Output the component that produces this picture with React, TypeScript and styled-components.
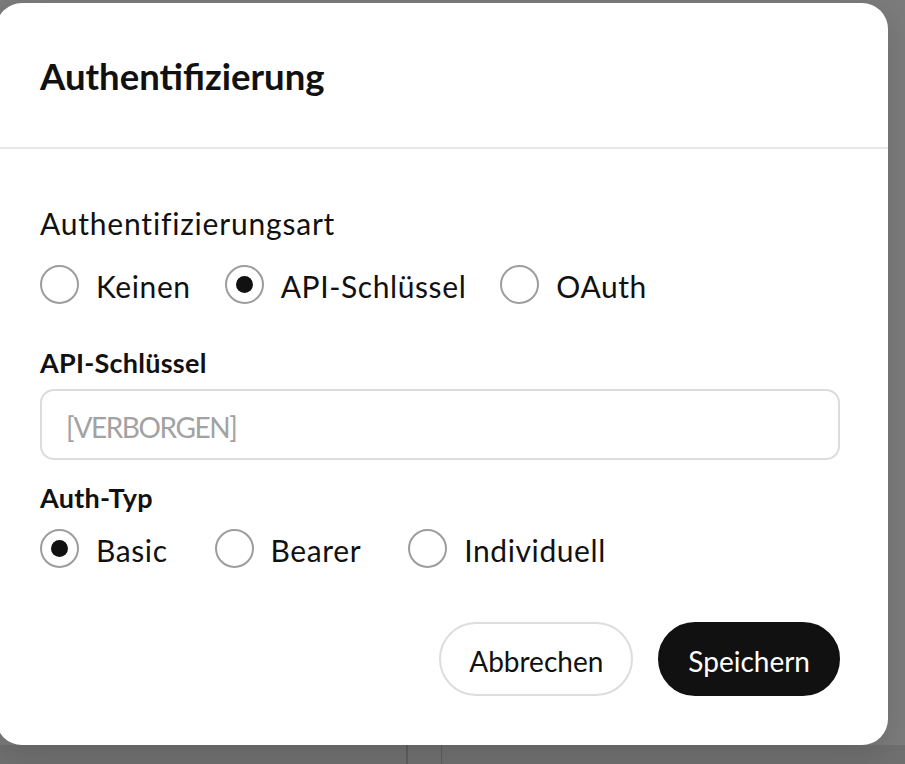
import React, { useState } from "react";
import styled, { createGlobalStyle } from "styled-components";

const GlobalStyle = createGlobalStyle`
  html, body { margin: 0; padding: 0; }
  body {
    background: #7b7b7b;
    font-family: "Lato", "Open Sans", sans-serif;
    color: #111;
    overflow: hidden;
  }
  * { box-sizing: border-box; }
`;

const Screen = styled.div`
  height: 764px;
  display: flex;
  flex-direction: column;
  background: #7b7b7b;
  overflow: hidden;
`;

const Modal = styled.section`
  flex: none;
  width: 892px;
  height: 742px;
  margin: 3px 0 0 -4px;
  background: #fff;
  border-radius: 26px;
  box-shadow: 0 8px 28px rgba(0, 0, 0, 0.12);
  display: flex;
  flex-direction: column;
  position: relative;
  z-index: 1;
`;

const Header = styled.header`
  height: 146px;
  padding: 52px 48px 0 44px;
  border-bottom: 2px solid #e7e7e7;
`;

const Title = styled.h2`
  margin: 0;
  font-size: 36.5px;
  line-height: 42px;
  font-weight: 700;
  color: #111;
`;

const Body = styled.div`
  padding: 52px 48px 49px 44px;
  display: flex;
  flex-direction: column;
`;

const SectionLabel = styled.div`
  font-size: 30px;
  line-height: 45px;
  letter-spacing: 0.8px;
  color: #111;
`;

const RadioRow = styled.div<{ $gap: number; $top: number }>`
  display: flex;
  align-items: center;
  gap: ${(p) => p.$gap}px;
  margin-top: ${(p) => p.$top}px;
`;

const Option = styled.label`
  display: flex;
  align-items: center;
  gap: 17px;
  cursor: pointer;
`;

const Circle = styled.span<{ $checked: boolean }>`
  width: 39px;
  height: 39px;
  margin-bottom: 4px;
  border-radius: 50%;
  border: 2px solid #9d9d9d;
  background: #fff;
  display: flex;
  align-items: center;
  justify-content: center;
  flex: none;
  &::after {
    content: "";
    width: 17px;
    height: 17px;
    border-radius: 50%;
    background: #111;
    display: ${(p) => (p.$checked ? "block" : "none")};
  }
`;

const OptionText = styled.span`
  font-size: 30px;
  line-height: 45px;
  letter-spacing: 0.6px;
  color: #111;
  white-space: nowrap;
`;

const FieldLabel = styled.div<{ $top: number }>`
  margin-top: ${(p) => p.$top}px;
  font-size: 27px;
  line-height: 39px;
  font-weight: 700;
  letter-spacing: 0.25px;
  color: #111;
`;

const TextInput = styled.input`
  margin-top: 7px;
  width: 100%;
  height: 71px;
  padding: 4px 24px 0 24px;
  border: 2px solid #dcdcdc;
  border-radius: 14px;
  font-family: "Lato", "Open Sans", sans-serif;
  font-size: 28px;
  color: #111;
  background: #fff;
  outline: none;
  &::placeholder {
    color: #a2a2a2;
    letter-spacing: -1.4px;
  }
`;

const Actions = styled.div`
  margin-top: 49px;
  display: flex;
  justify-content: flex-end;
  gap: 25px;
`;

const Button = styled.button<{ $primary?: boolean }>`
  height: 74px;
  padding: 4px 28px 0;
  border-radius: 37px;
  border: 2px solid ${(p) => (p.$primary ? "#111" : "#dddddd")};
  background: ${(p) => (p.$primary ? "#111" : "#fff")};
  color: ${(p) => (p.$primary ? "#fff" : "#111")};
  font-family: "Lato", "Open Sans", sans-serif;
  font-size: 28px;
  cursor: pointer;
`;

const Backdrop = styled.div`
  flex: 1;
  background: #6f6f6f;
  display: flex;
  padding-left: 406px;
  gap: 33px;
`;

const Divider = styled.div`
  width: 1.5px;
  background: #5c5c5c;
`;

type Opt = { id: string; label: string };

function RadioGroup({
  options,
  value,
  onChange,
  gap,
  top,
}: {
  options: Opt[];
  value: string;
  onChange: (v: string) => void;
  gap: number;
  top: number;
}) {
  return (
    <RadioRow $gap={gap} $top={top} role="radiogroup">
      {options.map((o) => (
        <Option key={o.id} onClick={() => onChange(o.id)}>
          <Circle $checked={value === o.id} />
          <OptionText>{o.label}</OptionText>
        </Option>
      ))}
    </RadioRow>
  );
}

export default function App() {
  const [kind, setKind] = useState("api");
  const [type, setType] = useState("basic");
  return (
    <>
      <GlobalStyle />
      <Screen>
        <Modal role="dialog" aria-label="Authentifizierung">
          <Header>
            <Title>Authentifizierung</Title>
          </Header>
          <Body>
            <SectionLabel>Authentifizierungsart</SectionLabel>
            <RadioGroup
              top={18}
              gap={34}
              value={kind}
              onChange={setKind}
              options={[
                { id: "none", label: "Keinen" },
                { id: "api", label: "API-Schlüssel" },
                { id: "oauth", label: "OAuth" },
              ]}
            />
            <FieldLabel $top={34}>API-Schlüssel</FieldLabel>
            <TextInput placeholder="[VERBORGEN]" readOnly />
            <FieldLabel $top={18}>Auth-Typ</FieldLabel>
            <RadioGroup
              top={11}
              gap={47}
              value={type}
              onChange={setType}
              options={[
                { id: "basic", label: "Basic" },
                { id: "bearer", label: "Bearer" },
                { id: "custom", label: "Individuell" },
              ]}
            />
            <Actions>
              <Button>Abbrechen</Button>
              <Button $primary>Speichern</Button>
            </Actions>
          </Body>
        </Modal>
        <Backdrop>
          <Divider />
          <Divider />
        </Backdrop>
      </Screen>
    </>
  );
}
